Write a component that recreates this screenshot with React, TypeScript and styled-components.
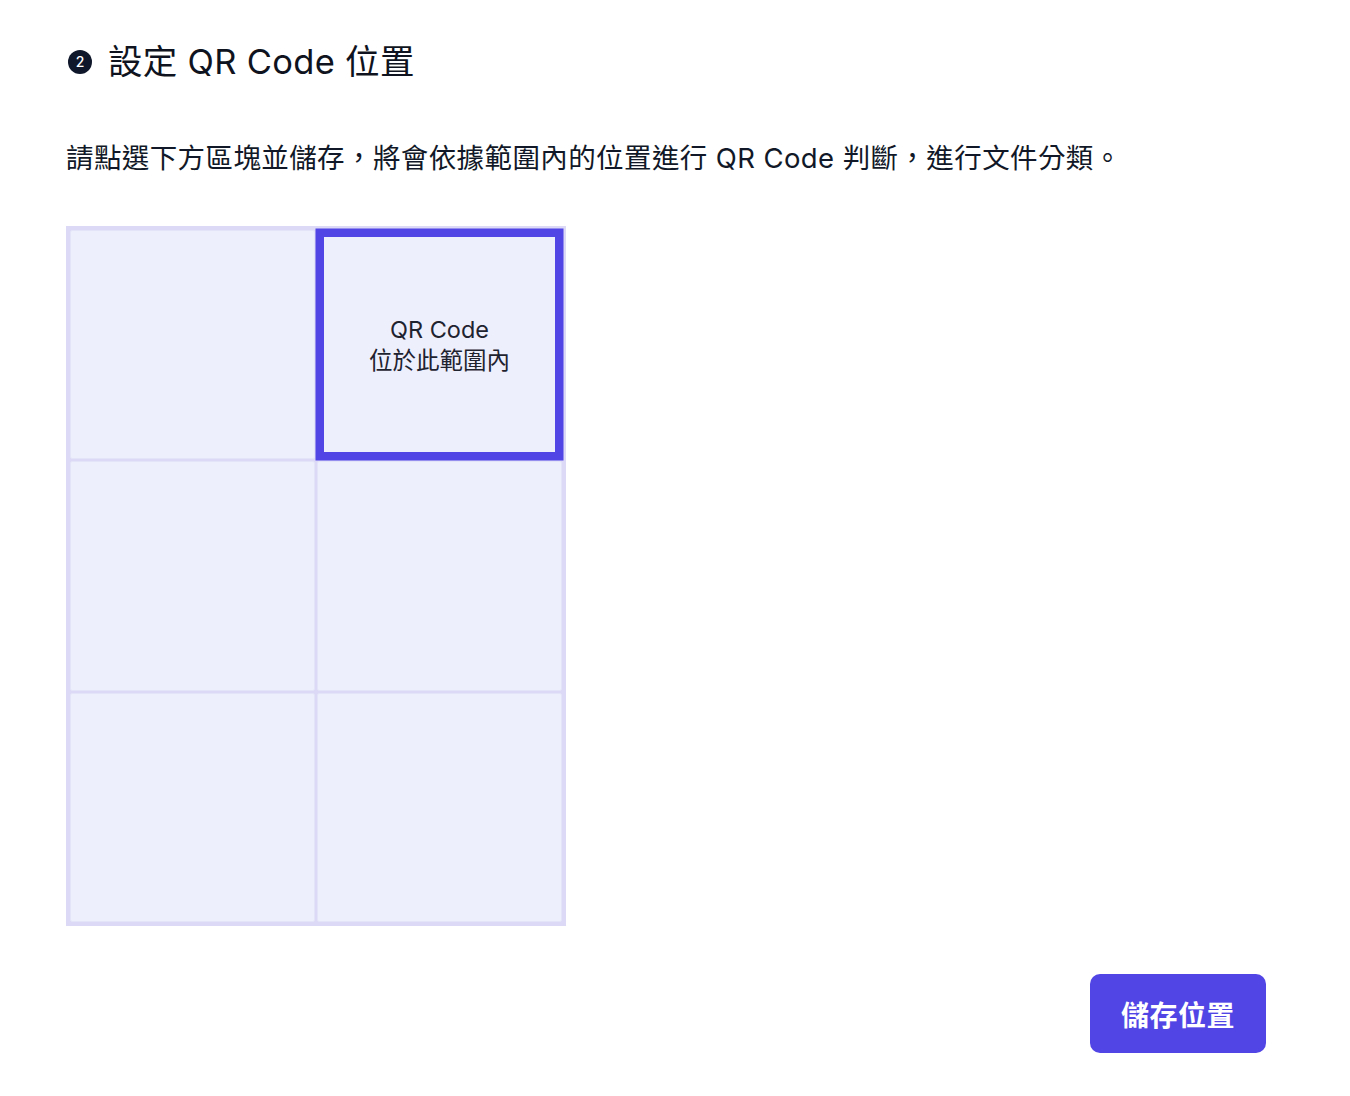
import React, { useState } from "react";
import styled, { createGlobalStyle, css } from "styled-components";

const GlobalStyle = createGlobalStyle`
  html, body { margin: 0; padding: 0; background: #ffffff; }
  body {
    font-family: Inter, "Noto Sans CJK TC", "Noto Sans", sans-serif;
    color: #111827;
  }
  * { box-sizing: border-box; }
`;

const Page = styled.div`
  width: 1350px;
  padding: 36px 84px 0 66px;
  display: flex;
  flex-direction: column;
`;

const Title = styled.h2`
  margin: 0;
  display: flex;
  align-items: center;
  gap: 16px;
  font-size: 34.5px;
  line-height: 52px;
  font-weight: 400;
  color: #0f1320;
  letter-spacing: 0.3px;
`;

const StepBadge = styled.span`
  flex-shrink: 0;
  width: 24px;
  height: 24px;
  margin-left: 2px;
  border-radius: 50%;
  background: #0f172a;
  color: #ffffff;
  font-size: 14px;
  line-height: 1;
  font-weight: 500;
  letter-spacing: 0;
  display: inline-flex;
  align-items: center;
  justify-content: center;
`;

const Description = styled.p`
  margin: 50px 0 0;
  font-size: 27.5px;
  line-height: 40px;
  font-weight: 400;
  letter-spacing: 0.4px;
  color: #111827;
`;

const Grid = styled.div`
  margin-top: 48px;
  width: 500px;
  height: 700px;
  display: grid;
  grid-template-columns: repeat(2, 1fr);
  grid-template-rows: repeat(3, 1fr);
  gap: 2px;
  padding: 2px;
  border: 2px solid #dcd9f6;
  background: #dcd9f6;
`;

const Cell = styled.button<{ $selected: boolean }>`
  margin: 0;
  padding: 0;
  border: 1px solid #e4e4f8;
  border-radius: 2px;
  background: #eeeffc;
  cursor: pointer;
  display: flex;
  align-items: center;
  justify-content: center;
  text-align: center;
  font-family: Inter, "Noto Sans CJK TC", sans-serif;
  font-size: 23.5px;
  line-height: 31px;
  color: #1f2330;
  ${(p) =>
    p.$selected &&
    css`
      border: 7px solid #5145e5;
      border-radius: 0;
      box-shadow: 0 0 0 1.5px #5145e5;
      position: relative;
      z-index: 1;
    `}
`;

const Footer = styled.div`
  margin-top: 48px;
  display: flex;
  justify-content: flex-end;
`;

const SaveButton = styled.button`
  width: 176px;
  height: 79px;
  border: none;
  border-radius: 10px;
  background: #5145e5;
  color: #ffffff;
  font-family: Inter, "Noto Sans CJK TC", sans-serif;
  font-size: 28px;
  font-weight: 700;
  letter-spacing: 0.5px;
  cursor: pointer;
`;

export default function App() {
  const [selected, setSelected] = useState(1);
  const cells = [0, 1, 2, 3, 4, 5];
  return (
    <>
      <GlobalStyle />
      <Page>
        <Title>
          <StepBadge>2</StepBadge>
          設定 QR Code 位置
        </Title>
        <Description>
          請點選下方區塊並儲存，將會依據範圍內的位置進行 QR Code 判斷，進行文件分類。
        </Description>
        <Grid>
          {cells.map((i) => (
            <Cell key={i} $selected={selected === i} onClick={() => setSelected(i)}>
              {selected === i && (
                <span>
                  QR Code
                  <br />
                  位於此範圍內
                </span>
              )}
            </Cell>
          ))}
        </Grid>
        <Footer>
          <SaveButton>儲存位置</SaveButton>
        </Footer>
      </Page>
    </>
  );
}
